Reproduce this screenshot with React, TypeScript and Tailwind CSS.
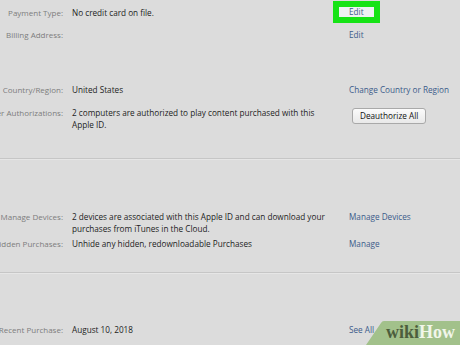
type Row = {
  label: string;
  lines: string[];
  action?: React.ReactNode;
  mt: string;
};

const link = "text-[#3b5b8a]";

function InfoRow({ label, lines, action, mt }: Row) {
  return (
    <div className={`grid grid-cols-[63px_268px_1fr] gap-x-[9px] items-start ${mt}`}>
      <div className="flex justify-end whitespace-nowrap text-[8px] text-[#7d7d7d]">{label}</div>
      <div className="text-[#1d1d1d]">
        {lines.map((l) => (
          <div key={l} className="whitespace-nowrap">
            {l}
          </div>
        ))}
      </div>
      <div className="whitespace-nowrap">{action}</div>
    </div>
  );
}

function Divider({ mt }: { mt: string }) {
  return <div className={`${mt} h-px bg-[#c6c6c6] shadow-[0_1px_0_#e6e6e6]`} />;
}

export default function App() {
  return (
    <div
      className="relative h-[345px] w-[460px] overflow-hidden bg-[#dcdcdc] pt-[7px] text-[8.2px] leading-[11.5px]"
      style={{ fontFamily: '"Open Sans", "Noto Sans", sans-serif' }}
    >
      <InfoRow
        mt="mt-0"
        label="Payment Type:"
        lines={["No credit card on file."]}
        action={
          <span className="relative -top-[1.5px] -ml-[10px] inline-block h-[10px] bg-[#eef1f4] px-[10px] leading-[10px] text-[#3b5b8a] outline-[6.5px] outline-solid outline-[#16e316]">
            Edit
          </span>
        }
      />
      <InfoRow mt="mt-[10.75px]" label="Billing Address:" lines={[]} action={<span className={link}>Edit</span>} />
      <InfoRow
        mt="mt-[43.5px]"
        label="Country/Region:"
        lines={["United States"]}
        action={<span className={link}>Change Country or Region</span>}
      />
      <InfoRow
        mt="mt-[11.5px]"
        label="Computer Authorizations:"
        lines={["2 computers are authorized to play content purchased with this", "Apple ID."]}
        action={
          <button className="mt-px ml-[3px] h-[16px] rounded-[3px] border border-[#a9a9a9] bg-gradient-to-b from-[#fbfbfb] to-[#e9e9e9] px-[7px] leading-[14px] text-[#111]">
            Deauthorize All
          </button>
        }
      />
      <Divider mt="mt-[27.75px]" />
      <InfoRow
        mt="mt-[52.25px]"
        label="Manage Devices:"
        lines={["2 devices are associated with this Apple ID and can download your", "purchases from iTunes in the Cloud."]}
        action={<span className={link}>Manage Devices</span>}
      />
      <InfoRow
        mt="mt-[4px]"
        label="Hidden Purchases:"
        lines={["Unhide any hidden, redownloadable Purchases"]}
        action={<span className={link}>Manage</span>}
      />
      <Divider mt="mt-[22.25px]" />
      <InfoRow
        mt="mt-[51.25px]"
        label="Recent Purchase:"
        lines={["August 10, 2018"]}
        action={<span className={link}>See All</span>}
      />

      <div className="absolute bottom-0 right-0 h-[24px] w-[95px]">
        <svg className="absolute inset-0" width="95" height="24" viewBox="0 0 95 24">
          <path d="M19 0 H95 V24 H1 L16 2 Q17 0 19 0 Z" fill="#a2c18b" />
        </svg>
        <div
          className="absolute left-[21px] top-[1px] text-[18px] font-bold leading-[20px]"
          style={{ fontFamily: '"Liberation Serif", serif' }}
        >
          <span className="text-[#4c5d3c]">wiki</span>
          <span className="text-[#f1f6ea]">How</span>
        </div>
      </div>
    </div>
  );
}
